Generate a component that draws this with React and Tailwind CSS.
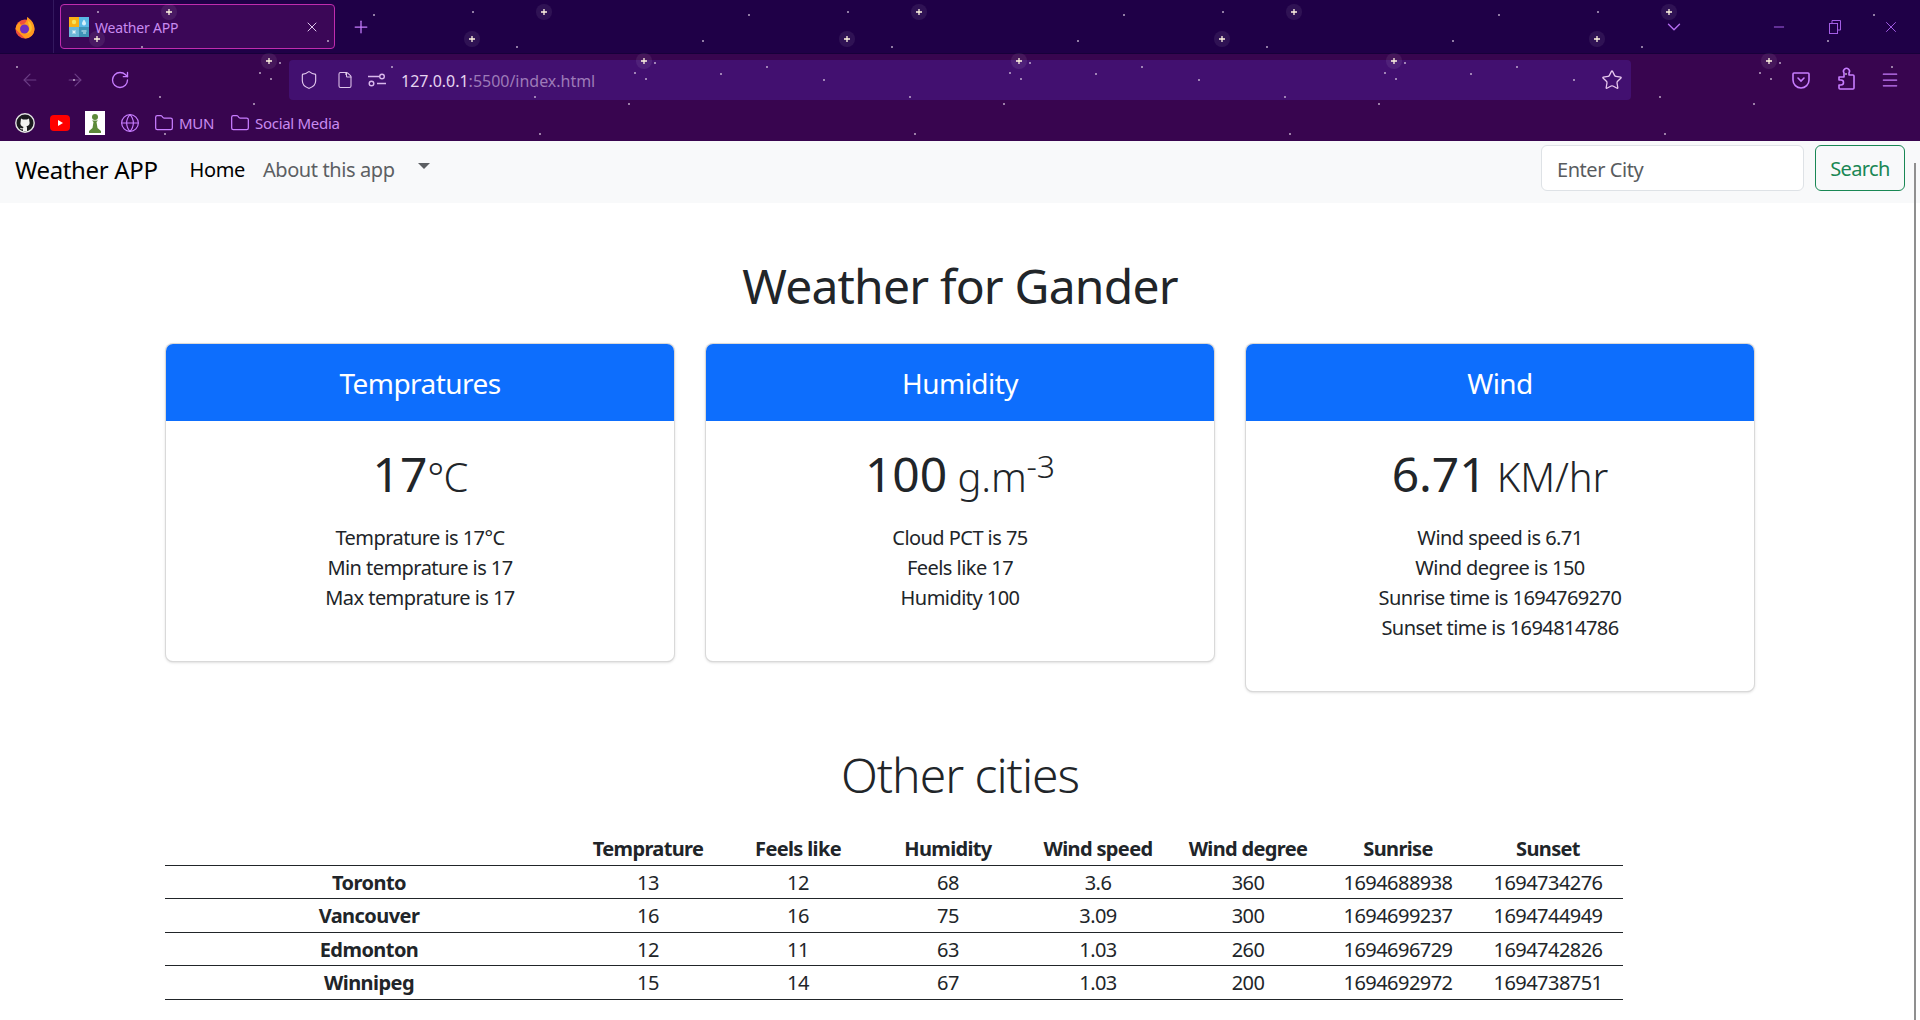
import {
  ArrowLeft,
  ArrowRight,
  ChevronDown,
  File,
  Folder,
  Globe,
  Menu,
  Minus,
  Plus,
  RotateCw,
  Shield,
  Star,
  X,
} from "lucide-react";

const cards = [
  {
    title: "Humidity",
    big: "100",
    unit: (
      <>
        {" "}g.m<sup className="text-[32px] leading-none relative -top-[14px]">-3</sup>
      </>
    ),
    lines: ["Cloud PCT is 75", "Feels like 17", "Humidity 100"],
  },
  {
    title: "Wind",
    big: "6.71",
    unit: " KM/hr",
    lines: ["Wind speed is 6.71", "Wind degree is 150", "Sunrise time is 1694769270", "Sunset time is 1694814786"],
  },
];

const cols = ["Temprature", "Feels like", "Humidity", "Wind speed", "Wind degree", "Sunrise", "Sunset"];

const rows = [
  ["Toronto", "13", "12", "68", "3.6", "360", "1694688938", "1694734276"],
  ["Vancouver", "16", "16", "75", "3.09", "300", "1694699237", "1694744949"],
  ["Edmonton", "12", "11", "63", "1.03", "260", "1694696729", "1694742826"],
  ["Winnipeg", "15", "14", "67", "1.03", "200", "1694692972", "1694738751"],
];

const bigStars = [[169, 12], [97, 39], [269, 61]];
const smallStars = [
  [98, 12], [142, 47], [374, 15], [17, 67], [260, 73], [280, 63], [271, 79],
  [160, 97], [254, 104], [165, 134], [328, 41], [346, 74], [74, 80],
];

// starry theme background, the tile repeats every 375px
const Stars = () => (
  <svg className="absolute inset-0 pointer-events-none" width="1920" height="141">
    <defs>
      <pattern id="stars" width="375" height="141" patternUnits="userSpaceOnUse">
        {bigStars.map(([x, y]) => (
          <g key={x}>
            <ellipse cx={x} cy={y} rx="8" ry="8" fill="#ffffff" fillOpacity="0.07" />
            <path d={`M${x - 3} ${y}h6M${x} ${y - 3}v6`} stroke="#fff4e0" strokeWidth="1.3" />
          </g>
        ))}
        {smallStars.map(([x, y]) => (
          <rect key={x} x={x - 0.75} y={y - 0.75} width="1.5" height="1.5" fill="#e8dcec" />
        ))}
      </pattern>
    </defs>
    <rect width="1920" height="141" fill="url(#stars)" />
  </svg>
);

const FirefoxLogo = () => (
  <svg width="20" height="24" viewBox="0 0 20 24">
    <circle cx="10" cy="14" r="9.500" fill="#f0503c" />
    <path d="M.5 14C1 10 3 8 5 7c-.5 2 .5 3 2.500 2.500C10 9 12.500 6 12 2c3.500 2 7.500 6 7.500 12 0 5-4 9.500-9.500 9.500" fill="#ff9a1f" />
    <circle cx="9.500" cy="14" r="4.500" fill="#6f2fc0" />
    <path d="M13 6c3.500 2 4.500 5.500 3.500 9-1 2.500-3.500 4-6 3.500 3-.5 4.500-3 3.800-6C14 10 13 8 13 6z" fill="#ffc02e" />
  </svg>
);

const Favicon = () => (
  <svg width="20" height="20" viewBox="0 0 20 20" className="shrink-0">
    <rect width="10" height="10" fill="#f9b115" />
    <rect x="10" width="10" height="10" fill="#59b8e6" />
    <rect y="10" width="10" height="10" fill="#6cb8d8" />
    <rect x="10" y="10" width="10" height="10" fill="#3f96b8" />
    <circle cx="5" cy="5" r="2.200" fill="#f7e35c" />
    <path d="M15 2.500c1.500 2 2 3 2 4a2 2 0 0 1-4 0c0-1 .5-2 2-4z" fill="#d4f0fb" />
    <path d="M3 15h4M5 13v4M3.500 13.500l3 3M6.500 13.500l-3 3" stroke="#e8f6fb" strokeWidth="0.8" />
    <path d="M12.500 14h5M14 16h3" stroke="#d4eef7" strokeWidth="1.200" />
  </svg>
);

const GithubIcon = () => (
  <svg width="20" height="20" viewBox="0 0 20 20">
    <circle cx="10" cy="10" r="9.200" fill="#1b1b1f" stroke="#e5e5e5" strokeWidth="1.400" />
    <path d="M6 5.500l2 1h4l2-1 .4 3c.8 2.400-.6 4.400-3 4.800.5.4.6 1 .6 1.600v3.400H8v-2c-1.600.3-2.600-.3-3-1.600.9.2 1.600.6 3 .8 0-.7.1-1.200.6-1.600-2.400-.4-3.800-2.400-3-4.800z" fill="#f2f2f2" />
  </svg>
);

const YoutubeIcon = () => (
  <svg width="20" height="16" viewBox="0 0 20 16">
    <rect width="20" height="16" rx="4" fill="#ff0000" />
    <path d="M8 5l5 3-5 3z" fill="#fff" />
  </svg>
);

const ChessIcon = () => (
  <svg width="20" height="24" viewBox="0 0 20 24">
    <rect width="20" height="24" fill="#fff" />
    <circle cx="10" cy="6" r="3" fill="#5d8a3a" />
    <path d="M7 9.500h6l-1.500 1.500 1 6 3.500 3v2H4v-2l3.500-3 1-6z" fill="#5d8a3a" />
  </svg>
);

const PocketIcon = () => (
  <svg width="20" height="20" viewBox="0 0 20 20" fill="none" stroke="#c77dff" strokeWidth="1.600">
    <path d="M3 3h14a1 1 0 0 1 1 1v6a8 8 0 0 1-16 0V4a1 1 0 0 1 1-1z" />
    <path d="M7 8l3 3 3-3" strokeLinecap="round" />
  </svg>
);

// firefox extensions button, not the lucide puzzle
const ExtensionIcon = () => (
  <svg width="18" height="24" viewBox="0 0 18 24" fill="none" stroke="#c77dff" strokeWidth="1.600" strokeLinejoin="round" className="-mt-[3px]">
    <path d="M2 14v-3h5V7a3 3 0 1 1 5 0v2h4a1 1 0 0 1 1 1v12a1 1 0 0 1-1 1H3a1 1 0 0 1-1-1v-3h2a2.500 2.500 0 0 0 0-5z" />
  </svg>
);

const SlidersIcon = () => (
  <svg width="18" height="14" viewBox="0 0 18 14" fill="none" stroke="#d9b8ec" strokeWidth="1.400">
    <path d="M0 3.500h11M9 10.500h9" />
    <circle cx="14" cy="3.500" r="2.300" />
    <circle cx="3.500" cy="10.500" r="2.300" />
  </svg>
);

const RestoreIcon = () => (
  <svg width="12" height="14" viewBox="0 0 12 14" fill="none" stroke="#a45ee5" strokeWidth="1">
    <rect x="0.500" y="3.500" width="8" height="10" />
    <path d="M3 3.500V0.500h8.500v9.500H8.500" />
  </svg>
);

const Bookmark = ({ label, className }) => (
  <div className={`flex items-center gap-[5px] ${className}`}>
    <Folder size={20} strokeWidth={1.5} className="text-[#c77dff]" />
    <span>{label}</span>
  </div>
);

const BrowserChrome = () => (
  <div className="relative h-[141px] shrink-0 overflow-hidden bg-[#38054f] font-['Noto_Sans',sans-serif]">
    {/* tab strip */}
    <div className="flex h-[54px] items-center bg-[#1f0047] border-b border-[#17003a]">
      <div className="flex h-full w-[54px] items-center justify-center border-r border-[#33185e] pr-[4px]">
        <FirefoxLogo />
      </div>
      <div className="ml-[6px] flex h-[45px] w-[275px] items-center rounded-[4px] border border-[#c02cae] bg-[#3b0757] pl-[8px] pr-[14px]">
        <Favicon />
        <span className="ml-[6px] pt-[1px] text-[14px] tracking-[-0.2px] text-[#c98bf0]">Weather APP</span>
        <X size={16} strokeWidth={1.5} className="ml-auto text-[#dcc6ea]" />
      </div>
      <Plus size={20} strokeWidth={1.5} className="ml-[16px] text-[#c77dff]" />
      <ChevronDown size={22} strokeWidth={1.5} className="ml-auto text-[#b56cf0]" />
      <Minus size={16} strokeWidth={1.5} className="ml-[86px] text-[#a45ee5]" />
      <div className="ml-[42px] flex"><RestoreIcon /></div>
      <X size={18} strokeWidth={1.3} className="ml-[41px] mr-[20px] text-[#a45ee5]" />
    </div>

    {/* toolbar */}
    <div className="flex h-[51px] items-center pl-[20px]">
      <ArrowLeft size={20} strokeWidth={1.4} className="text-[#6b3d85]" />
      <ArrowRight size={20} strokeWidth={1.4} className="ml-[25px] text-[#6b3d85]" />
      <RotateCw size={20} strokeWidth={1.6} className="ml-[25px] text-[#c77dff]" />
      <div className="ml-[159px] flex h-[40px] w-[1342px] items-center rounded-[4px] bg-[#421070] pl-[10px] pr-[8px]">
        <Shield size={20} strokeWidth={1.4} className="text-[#e0c6ec]" />
        <File size={18} strokeWidth={1.4} className="ml-[17px] text-[#e0c6ec]" />
        <div className="ml-[14px] flex"><SlidersIcon /></div>
        <span className="ml-[15px] pt-[3px] text-[16px] tracking-[-0.02px] text-[#e6d4f0]">
          127.0.0.1<span className="text-[#9d7ab8]">:5500/index.html</span>
        </span>
        <Star size={22} strokeWidth={1.4} className="ml-auto text-[#e8c8ee]" />
      </div>
      <div className="ml-auto flex items-center pr-[20px]">
        <PocketIcon />
        <div className="ml-[26px] flex"><ExtensionIcon /></div>
        <Menu size={20} strokeWidth={1.5} className="ml-[25px] text-[#c77dff]" />
      </div>
    </div>

    {/* bookmarks */}
    <div className="flex h-[36px] items-center pl-[15px] text-[15px] tracking-[-0.3px] text-[#c98bf0]">
      <GithubIcon />
      <div className="ml-[15px] flex"><YoutubeIcon /></div>
      <div className="ml-[15px] flex"><ChessIcon /></div>
      <Globe size={20} strokeWidth={1.4} className="ml-[15px] text-[#c77dff]" />
      <Bookmark label="MUN" className="ml-[14px]" />
      <Bookmark label="Social Media" className="ml-[16px]" />
    </div>

    <Stars />
  </div>
);

const Navbar = () => (
  <nav className="flex h-[62px] shrink-0 items-center bg-[#f8f9fa] pb-[8px] pl-[15px] pr-[15px] text-[20px]">
    <span className="pt-[4px] text-[24px] tracking-[-0.35px] text-black">Weather APP</span>
    <span className="ml-[32px] pt-[4px] tracking-[-0.4px] text-black">Home</span>
    <span className="ml-[18px] pt-[4px] tracking-[-0.4px] text-[#5c5f63]">About this app</span>
    <span className="ml-[23px] mb-[4px] border-x-[6px] border-t-[6px] border-x-transparent border-t-[#5c5f63]" />
    <input
      placeholder="Enter City"
      className="ml-auto h-[46px] w-[263px] rounded-[6px] border border-[#dee2e6] bg-white px-[15px] pt-[2px] tracking-[-0.45px] placeholder:text-[#595c5f]"
    />
    <button className="ml-[11px] h-[46px] w-[90px] rounded-[6px] border border-[#198754] pt-[2px] tracking-[-0.6px] text-[#198754]">
      Search
    </button>
  </nav>
);

const WeatherCard = ({ title, big, unit, lines }) => (
  <div className="w-[510px] overflow-hidden rounded-[8px] border border-black/15 bg-white shadow-sm">
    <div className="flex h-[77px] items-center justify-center bg-[#0d6efd] text-[28px] tracking-[-0.55px] text-white">
      {title}
    </div>
    <div className="pt-[24px] pb-[48px] text-center">
      <div className="mb-[20px] h-[58px] text-[48px] leading-[58px] tracking-[-0.1px]">
        {big}
        <span className="text-[40px] font-light">{unit}</span>
      </div>
      {lines.map((l) => (
        <div key={l} className="h-[30px] text-[20px] leading-[30px] tracking-[-0.55px]">
          {l}
        </div>
      ))}
    </div>
  </div>
);

export default function App() {
  return (
    <div className="relative flex h-[1020px] w-[1920px] flex-col overflow-hidden bg-white font-['Noto_Sans',sans-serif] text-[#212529]">
      <BrowserChrome />
      <Navbar />

      <main className="px-[165px]">
        <h1 className="mt-[50px] text-center text-[48px] leading-[66px] tracking-[-0.8px]">Weather for Gander</h1>

        <div className="mt-[24px] flex items-start gap-[30px]">
          <WeatherCard
            title="Tempratures"
            big="17"
            unit={<span className="tracking-[-1px]">°C</span>}
            lines={["Temprature is 17°C", "Min temprature is 17", "Max temprature is 17"]}
          />
          {cards.map((c) => (
            <WeatherCard key={c.title} {...c} />
          ))}
        </div>

        <h2 className="mt-[50px] text-center text-[48px] font-light leading-[66px] tracking-[-1px]">Other cities</h2>

        <table className="mt-[25px] w-[1458px] table-fixed border-collapse text-[20px] leading-none tracking-[-0.55px]">
          <colgroup>
            <col className="w-[408px]" />
            {cols.map((c) => (
              <col key={c} className="w-[150px]" />
            ))}
          </colgroup>
          <thead>
            <tr className="h-[32px] border-b border-[#212529]">
              <th />
              {cols.map((c) => (
                <th key={c} className="font-bold tracking-[-0.65px]">{c}</th>
              ))}
            </tr>
          </thead>
          <tbody>
            {rows.map((r) => (
              <tr key={r[0]} className="h-[33.5px] border-b border-[#212529] text-center">
                {r.map((v, i) => (
                  <td key={i} className={i === 0 ? "pt-[2px] font-bold" : "pt-[2px]"}>{v}</td>
                ))}
              </tr>
            ))}
          </tbody>
        </table>
      </main>

      {/* page scrollbar */}
      <div className="absolute right-[4px] top-[163px] bottom-0 w-[2px] bg-[#8f8f8f]" />
    </div>
  );
}
